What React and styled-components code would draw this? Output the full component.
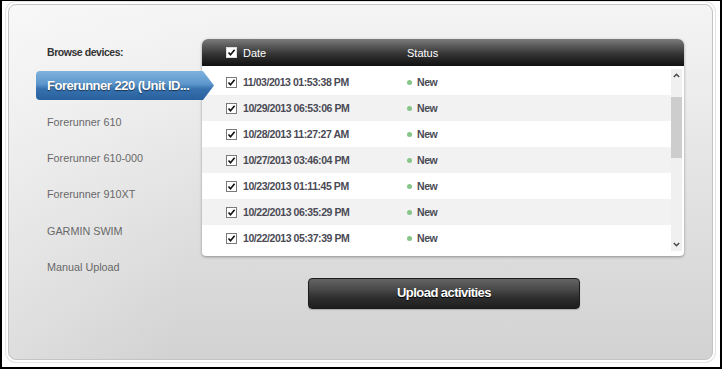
import React from 'react';
import styled, { createGlobalStyle } from 'styled-components';

const GlobalStyle = createGlobalStyle`
  html, body { margin: 0; padding: 0; background: #fff; }
  body { font-family: "Liberation Sans", Arial, sans-serif; }
`;

const Frame = styled.div`
  width: 722px;
  height: 369px;
  box-sizing: border-box;
  border: 2px solid #000;
  border-top-width: 1px;
  padding: 3px 7px 7px 6px;
  background: #fff;
  display: flex;
`;

const Panel = styled.div`
  flex: 1;
  box-sizing: border-box;
  border: 1px solid #c4c4c4;
  border-radius: 8px;
  box-shadow: 0 0 0 2px #fff, 0 0 0 3px #e4e4e4;
  background: linear-gradient(100deg, rgba(255,255,255,0.35) 0%, rgba(255,255,255,0) 30%),
    linear-gradient(#f4f4f4 0%, #ececec 25%, #dcdcdc 70%, #d2d2d2 100%);
  padding: 34px 0 0 27px;
  display: flex;
  align-items: flex-start;
`;

const LeftCol = styled.div`
  width: 166px;
  padding-top: 6px;
  display: flex;
  flex-direction: column;
`;

const Label = styled.div`
  padding-left: 11px;
  font-size: 10.5px;
  letter-spacing: -0.45px;
  font-weight: bold;
  color: #333;
  line-height: 14px;
  height: 14px;
`;

const DeviceList = styled.div`
  margin-top: 12px;
  display: flex;
  flex-direction: column;
  gap: 7px;
`;

const DeviceItem = styled.div`
  height: ${p => (p.$selected ? '29px' : '29.4px')};
  display: flex;
  align-items: center;
  padding-left: 11px;
  white-space: nowrap;
  box-sizing: border-box;
  font-size: ${p => (p.$selected ? '13px' : '10.8px')};
  letter-spacing: ${p => (p.$selected ? '-0.5px' : '0')};
  font-weight: ${p => (p.$selected ? 'bold' : 'normal')};
  color: ${p => (p.$selected ? '#fff' : '#686868')};
  ${p =>
    p.$selected &&
    `
    position: relative;
    z-index: 2;
    margin-right: -12px;
    border-radius: 4px 0 0 4px;
    background: linear-gradient(#7fb3df 0%, #5c96cb 45%, #3671ae 62%, #29609d 100%);
    clip-path: polygon(0 0, calc(100% - 11px) 0, 100% 50%, calc(100% - 11px) 100%, 0 100%);
    text-shadow: 0 1px 1px rgba(0,0,0,0.55);
  `}
`;

const RightCol = styled.div`
  width: 482px;
  display: flex;
  flex-direction: column;
  align-items: center;
`;

const Table = styled.div`
  width: 100%;
  background: #fff;
  border-radius: 6px 6px 4px 4px;
  box-shadow: 0 1px 3px rgba(0,0,0,0.35);
  overflow: hidden;
`;

const Header = styled.div`
  height: 27px;
  display: flex;
  align-items: center;
  padding-left: 24px;
  color: #fff;
  font-size: 11px;
  background: linear-gradient(#7c7c7c 0%, #5a5a5a 25%, #353535 55%, #1c1c1c 85%, #111 100%);
`;

const Col = styled.div`
  display: flex;
  align-items: center;
  width: ${p => p.$w || 'auto'};
`;

const Body = styled.div`
  height: 190px;
  display: flex;
`;

const Rows = styled.div`
  flex: 1;
  padding-top: 3px;
`;

const Row = styled.div`
  height: 26px;
  display: flex;
  align-items: center;
  padding-left: 24px;
  background: ${p => (p.$alt ? '#f2f2f2' : '#fff')};
`;

const DateText = styled.span`
  font-size: 10.5px;
  letter-spacing: -0.45px;
  font-weight: bold;
  color: #4a4a55;
`;

const HeadText = styled.span``;

const Dot = styled.span`
  width: 5px;
  height: 5px;
  border-radius: 50%;
  background: #86c686;
  margin-right: 5px;
`;

const Scrollbar = styled.div`
  width: 11px;
  margin: 3px 2px 5px 0;
  background: #f0f0f0;
  display: flex;
  flex-direction: column;
  align-items: center;
`;

const Arrow = styled.div`
  height: 13px;
  display: flex;
  align-items: center;
  justify-content: center;
`;

const Thumb = styled.div`
  width: 11px;
  height: 61px;
  margin-top: 15px;
  background: #cdcdcd;
`;

const Spacer = styled.div`
  flex: 1;
`;

const UploadButton = styled.button`
  margin: 22px 0 0 2px;
  width: 272px;
  height: 31px;
  border: 1px solid #1c1c1c;
  border-radius: 4px;
  background: linear-gradient(#646464 0%, #4a4a4a 35%, #2e2e2e 65%, #1e1e1e 100%);
  color: #fff;
  font-family: "Liberation Sans", Arial, sans-serif;
  font-size: 13px;
  letter-spacing: -0.55px;
  font-weight: bold;
  text-shadow: 0 1px 1px #000;
  padding: 0 0 3px;
  box-shadow: 0 1px 1px rgba(0,0,0,0.2);
`;

const CheckBox = ({ header }) => (
  <svg width="11" height="11" viewBox="0 0 11 11" style={{ marginRight: 6, flex: 'none' }}>
    <rect x="0.5" y="0.5" width="10" height="10" fill="#fff" stroke={header ? '#ddd' : '#7a7a7a'} />
    <path d="M2.5 5.5 L4.5 7.8 L8.6 2.8" fill="none" stroke="#111" strokeWidth="1.6" />
  </svg>
);

const rows = [
  '11/03/2013 01:53:38 PM',
  '10/29/2013 06:53:06 PM',
  '10/28/2013 11:27:27 AM',
  '10/27/2013 03:46:04 PM',
  '10/23/2013 01:11:45 PM',
  '10/22/2013 06:35:29 PM',
  '10/22/2013 05:37:39 PM',
];

const devices = [
  'Forerunner 220 (Unit ID...',
  'Forerunner 610',
  'Forerunner 610-000',
  'Forerunner 910XT',
  'GARMIN SWIM',
  'Manual Upload',
];

export default function App() {
  return (
    <>
      <GlobalStyle />
      <Frame>
        <Panel>
          <LeftCol>
            <Label>Browse devices:</Label>
            <DeviceList>
              {devices.map((d, i) => (
                <DeviceItem key={d} $selected={i === 0}>{d}</DeviceItem>
              ))}
            </DeviceList>
          </LeftCol>
          <RightCol>
            <Table>
              <Header>
                <Col $w="181px">
                  <CheckBox header />
                  <HeadText>Date</HeadText>
                </Col>
                <Col>
                  <HeadText>Status</HeadText>
                </Col>
              </Header>
              <Body>
                <Rows>
                  {rows.map((r, i) => (
                    <Row key={i} $alt={i % 2 === 1}>
                      <Col $w="181px">
                        <CheckBox />
                        <DateText>{r}</DateText>
                      </Col>
                      <Col>
                        <Dot />
                        <DateText>New</DateText>
                      </Col>
                    </Row>
                  ))}
                </Rows>
                <Scrollbar>
                  <Arrow>
                    <svg width="7" height="5" viewBox="0 0 7 5">
                      <path d="M0.8 4 L3.5 1.3 L6.2 4" fill="none" stroke="#444" strokeWidth="1.4" />
                    </svg>
                  </Arrow>
                  <Thumb />
                  <Spacer />
                  <Arrow>
                    <svg width="7" height="5" viewBox="0 0 7 5">
                      <path d="M0.8 1 L3.5 3.7 L6.2 1" fill="none" stroke="#444" strokeWidth="1.4" />
                    </svg>
                  </Arrow>
                </Scrollbar>
              </Body>
            </Table>
            <UploadButton>Upload activities</UploadButton>
          </RightCol>
        </Panel>
      </Frame>
    </>
  );
}
